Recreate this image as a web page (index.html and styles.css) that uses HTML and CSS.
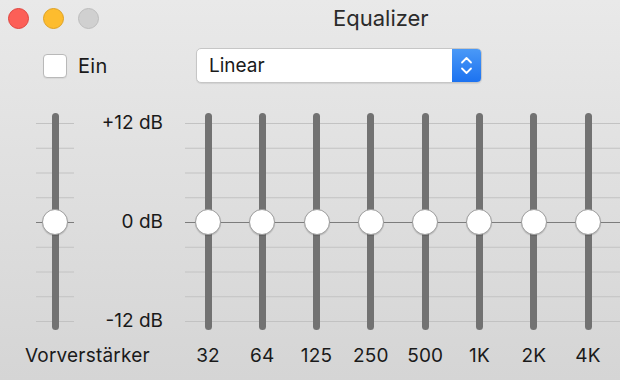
FILE: index.html
```html
<!DOCTYPE html>
<html lang="de">
<head>
  <meta charset="UTF-8" />
  <title>Equalizer</title>
  <link rel="stylesheet" href="styles.css">
</head>
<body>
  <div class="window">
    <header class="titlebar">
      <div class="lights">
        <span class="light red"></span>
        <span class="light yellow"></span>
        <span class="light grey"></span>
      </div>
      <div class="title">Equalizer</div>
    </header>

    <div class="toolbar">
      <label class="toggle">
        <span class="checkbox"></span>
        Ein
      </label>
      <div class="select">
        <span class="select-value">Linear</span>
        <span class="stepper">
          <svg width="29" height="35" viewBox="0 0 29 35">
            <path d="M10 14.5 L14.5 10 L19 14.5" fill="none" stroke="#fff" stroke-width="1.8" stroke-linecap="round" stroke-linejoin="round"/>
            <path d="M10 20.5 L14.5 25 L19 20.5" fill="none" stroke="#fff" stroke-width="1.8" stroke-linecap="round" stroke-linejoin="round"/>
          </svg>
        </span>
      </div>
    </div>

    <div class="eq">
      <div class="slider preamp">
        <span class="track"></span>
        <span class="knob"></span>
      </div>
      <div class="scale">
        <span>+12 dB</span>
        <span>0 dB</span>
        <span>-12 dB</span>
      </div>
      <div class="bands">
        <div class="slider"><span class="track"></span><span class="knob"></span></div>
        <div class="slider"><span class="track"></span><span class="knob"></span></div>
        <div class="slider"><span class="track"></span><span class="knob"></span></div>
        <div class="slider"><span class="track"></span><span class="knob"></span></div>
        <div class="slider"><span class="track"></span><span class="knob"></span></div>
        <div class="slider"><span class="track"></span><span class="knob"></span></div>
        <div class="slider"><span class="track"></span><span class="knob"></span></div>
        <div class="slider"><span class="track"></span><span class="knob"></span></div>
      </div>
    </div>

    <div class="labels">
      <span class="preamp-label">Vorverstärker</span>
      <div class="band-labels">
        <span>32</span>
        <span>64</span>
        <span>125</span>
        <span>250</span>
        <span>500</span>
        <span>1K</span>
        <span>2K</span>
        <span>4K</span>
      </div>
    </div>
  </div>
</body>
</html>
```

FILE: styles.css
```css
html, body {
  margin: 0;
  padding: 0;
}
body {
  width: 620px;
  height: 380px;
  overflow: hidden;
  font-family: Inter, "Liberation Sans", sans-serif;
  color: #1a1a1a;
}
.window {
  height: 380px;
  overflow: hidden;
  background: linear-gradient(to bottom, #e9e9e9, #d5d5d5);
}

/* title bar */
.titlebar {
  display: flex;
  align-items: center;
  height: 36px;
}
.lights {
  display: flex;
  gap: 14px;
  padding-left: 8px;
}
.light {
  width: 21px;
  height: 21px;
  border-radius: 50%;
  box-sizing: border-box;
}
.red {
  background: #fc5f57;
  border: 1px solid #e0443e;
}
.yellow {
  background: #fdbc2e;
  border: 1px solid #dea123;
}
.grey {
  background: #d0d0d0;
  border: 1px solid #bdbdbd;
}
.title {
  margin-left: 234px;
  font-size: 22px;
  color: #2b2b2b;
}

/* toolbar */
.toolbar {
  display: flex;
  align-items: center;
  margin-top: 12px;
  height: 35px;
}
.toggle {
  display: flex;
  align-items: center;
  gap: 11px;
  width: 153px;
  margin-left: 43px;
  font-size: 20px;
  letter-spacing: 0.3px;
}
.checkbox {
  width: 24px;
  height: 24px;
  box-sizing: border-box;
  background: #fff;
  border: 1px solid #b9b9b9;
  border-radius: 4px;
  box-shadow: 0 1px 1px rgba(0,0,0,0.06);
}
.select {
  display: flex;
  width: 286px;
  height: 35px;
  box-sizing: border-box;
  background: #fff;
  border: 1px solid #c6c6c6;
  border-radius: 5px;
  box-shadow: 0 1px 1px rgba(0,0,0,0.08);
  overflow: hidden;
}
.select-value {
  flex: 1;
  padding-left: 12px;
  font-size: 19px;
  line-height: 33px;
}
.stepper {
  width: 29px;
  background: linear-gradient(to bottom, #4a99f7, #1c72f0);
}
.stepper svg {
  display: block;
  margin-top: -1px;
}

/* equalizer */
.eq {
  display: flex;
  margin-top: 29px;
  height: 220px;
  padding-left: 36px;
}
.slider {
  position: relative;
  display: flex;
  justify-content: center;
  height: 220px;
}
.preamp {
  width: 38px;
  background:
    linear-gradient(#7c7c7c, #7c7c7c) no-repeat 0 110px / 100% 1px,
    linear-gradient(to bottom, #c2c2c2 0 1px, transparent 1px) repeat-y 0 11px / 100% 24.75px;
}
.track {
  margin-top: 1px;
  width: 7px;
  height: 217px;
  background: #727272;
  border-radius: 4px;
}
.knob {
  position: absolute;
  top: 97px;
  left: 50%;
  width: 26px;
  height: 26px;
  margin-left: -13px;
  box-sizing: border-box;
  background: #fff;
  border: 1px solid #9c9c9c;
  border-radius: 50%;
  box-shadow: 0 1px 1px rgba(0,0,0,0.15);
}
.scale {
  display: flex;
  flex-direction: column;
  justify-content: space-between;
  align-items: flex-end;
  width: 89px;
  font-size: 19px;
  line-height: 22px;
}
.bands {
  flex: 1;
  display: flex;
  gap: 8.3px;
  margin-left: 22px;
  background:
    linear-gradient(#7c7c7c, #7c7c7c) no-repeat 0 110px / 100% 1px,
    linear-gradient(to bottom, #c2c2c2 0 1px, transparent 1px) repeat-y 0 11px / 100% 24.75px;
}
.bands .slider {
  width: 46px;
  flex: none;
}

/* labels */
.labels {
  display: flex;
  margin-top: 13px;
  height: 22px;
  font-size: 19px;
  line-height: 22px;
  letter-spacing: 0.2px;
}
.preamp-label {
  width: 160px;
  padding-left: 25px;
}
.band-labels {
  display: flex;
  gap: 8.3px;
}
.band-labels span {
  width: 46px;
  text-align: center;
}
```
